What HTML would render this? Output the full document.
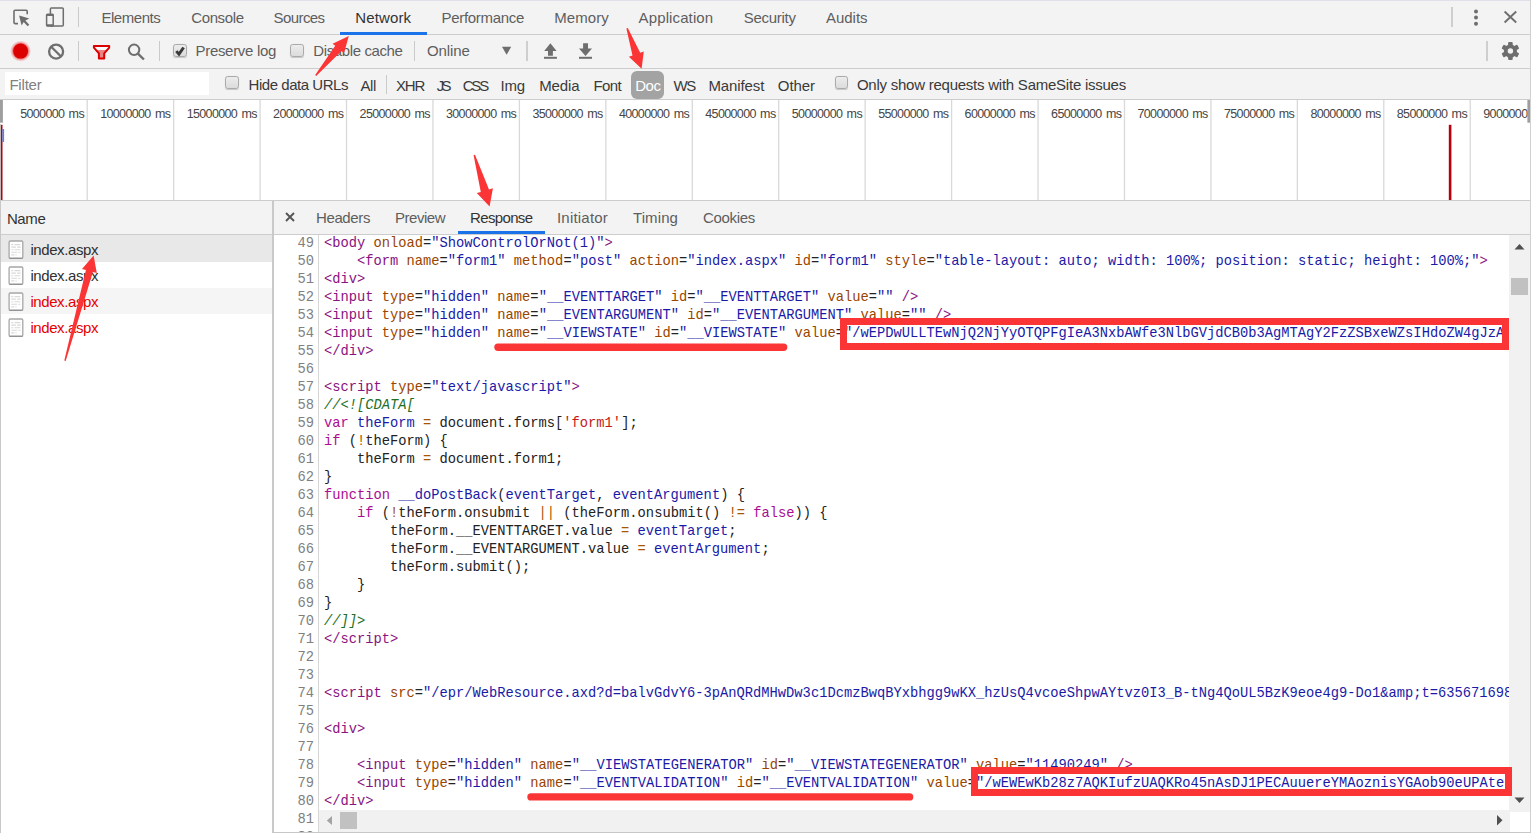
<!DOCTYPE html>
<html><head><meta charset="utf-8"><title>DevTools</title>
<style>
html,body{margin:0;padding:0}
body{width:1531px;height:833px;position:relative;overflow:hidden;background:#fff;font-family:"Liberation Sans", sans-serif}
.abs,.t,.gl,.fi{position:absolute}
.t{white-space:pre;line-height:20px;height:20px;font-family:"Liberation Sans", sans-serif}
.gl{top:100px;width:1.2px;height:100px;background:#dcdcdc}
.hl{position:absolute;left:0;width:1531px;height:1px;background:#cdcdcd}
.vs{position:absolute;width:1px;background:#cacaca}
.cb{position:absolute;width:11.3px;height:11.2px;border:1px solid #aaa;border-radius:2.8px;background:linear-gradient(#ececec,#dcdcdc);box-shadow:0 0.6px 0.8px rgba(0,0,0,.18)}
.fi{left:8px;width:13px;height:16px;border:1px solid #b4b4b4;border-radius:2px;background:#fdfdfd;box-shadow:0 1px 0 #c8c8c8}
.fi b{display:block;height:1px;margin:2px 2px 0 2px;background:#d4d4d4}
.fi b:first-child{margin-top:3px}
#nums,#code{position:absolute;top:234px;font:13.75px/18px "Liberation Mono", monospace;white-space:pre}
#nums{left:274px;width:40px;text-align:right;color:#808080}
#code{left:324px;color:#222}
#code i{font-style:normal}
#code .g{color:#881280} #code .a{color:#994500} #code .v{color:#1a1aa6}
#code .k{color:#aa0d91} #code .d{color:#1a1aa6} #code .o{color:#a85400}
#code .s{color:#c41a16} #code .c{color:#236e25;font-style:italic}
</style></head><body>
<!-- top bars -->
<div class="abs" style="left:0;top:0;width:1531px;height:100px;background:#f3f3f3"></div>
<div class="hl" style="top:0;background:#dfe0ea"></div>
<div class="hl" style="top:34px"></div>
<div class="hl" style="top:68px"></div>
<div class="hl" style="top:99px"></div>
<!-- active tab underline -->
<div class="abs" style="left:340px;top:32px;width:87px;height:3px;background:#1a73e8"></div>
<!-- separators -->
<div class="vs" style="left:78px;top:7px;height:20px"></div>
<div class="vs" style="left:1451.3px;top:7px;height:20px;width:1.6px;background:#cecece"></div>
<div class="vs" style="left:78px;top:41px;height:20px"></div>
<div class="vs" style="left:159px;top:41px;height:20px"></div>
<div class="vs" style="left:414px;top:41px;height:20px"></div>
<div class="vs" style="left:526.2px;top:41px;height:20px;width:1.7px;background:#cecece"></div>
<div class="vs" style="left:1486.3px;top:41px;height:20px;width:1.6px;background:#cecece"></div>
<div class="vs" style="left:386px;top:75px;height:19px"></div>
<!-- filter input -->
<div class="abs" style="left:5px;top:72px;width:204px;height:23px;background:#fff"></div>
<!-- Doc pill -->
<div class="abs" style="left:631px;top:71px;width:33px;height:28px;border-radius:6px;background:#a3a3a3"></div>
<!-- checkboxes -->
<div class="cb" style="left:173.3px;top:44.3px"></div>
<div class="cb" style="left:290.3px;top:44.3px"></div>
<div class="cb" style="left:225.4px;top:76.2px"></div>
<div class="cb" style="left:834.5px;top:76.2px"></div>
<!-- icons -->
<svg class="abs" style="left:0;top:0" width="1531" height="100" viewBox="0 0 1531 100">
 <!-- inspect -->
 <g fill="none" stroke="#6e6e6e" stroke-width="1.6">
  <path d="M27.2 14.3V11.3a1 1 0 0 0-1-1H15a1 1 0 0 0-1 1v11.3a1 1 0 0 0 1 1h3"/>
 </g>
 <path d="M19.1 15.6l10.2 3-3.9 1.9 3.9 4.2-1.7 1.5-3.9-4.3-2.1 3.6z" fill="#6e6e6e"/>
 <!-- device -->
 <g fill="none" stroke="#6e6e6e" stroke-width="1.5">
  <rect x="50.4" y="8" width="12.9" height="17.9" rx="1"/>
  <rect x="46.6" y="14.3" width="6.6" height="11.6" rx="0.8" fill="#f3f3f3"/>
  <path d="M46.6 14.9h6.6M46.6 25.2h6.6" stroke-width="2"/>
 </g>
 <!-- dots -->
 <circle cx="1476" cy="11.5" r="2" fill="#6e6e6e"/><circle cx="1476" cy="17.6" r="2" fill="#6e6e6e"/><circle cx="1476" cy="23.8" r="2" fill="#6e6e6e"/>
 <!-- close -->
 <path d="M1504.6 11.5l11.6 11M1516.2 11.5l-11.6 11" stroke="#6e6e6e" stroke-width="1.9" fill="none"/>
 <!-- record -->
 <defs><radialGradient id="rg"><stop offset="0.7" stop-color="#e84040" stop-opacity="0.75"/><stop offset="1" stop-color="#f08080" stop-opacity="0"/></radialGradient></defs><circle cx="20.6" cy="51.1" r="10.6" fill="url(#rg)"/>
 <circle cx="20.6" cy="51.1" r="7.5" fill="#dd0000"/>
 <!-- clear -->
 <circle cx="56.1" cy="51.6" r="7" fill="none" stroke="#6e6e6e" stroke-width="2.3"/>
 <path d="M51.2 46.7l9.8 9.8" stroke="#6e6e6e" stroke-width="2.3"/>
 <!-- funnel -->
 <path d="M93.9 46h15.3v1.6l-5 5.8v5h-5.3v-5l-5-5.8z" fill="#fbfbfb"/>
 <path d="M96.8 50h9.5l-2.1 3.4v5h-5.3v-5z" fill="#e98585"/>
 <path d="M93.9 46h15.3v1.6l-5 5.8v5.2h-5.3v-5.2l-5-5.8z" fill="none" stroke="#dd0000" stroke-width="2" stroke-linejoin="round"/>
 <!-- search -->
 <circle cx="134.1" cy="49.8" r="5.2" fill="none" stroke="#6e6e6e" stroke-width="2"/>
 <path d="M137.9 53.6l6 5.9" stroke="#6e6e6e" stroke-width="2.4"/>
 <!-- dropdown -->
 <path d="M502 46.8h9.2l-4.6 8z" fill="#6e6e6e"/>
 <!-- upload -->
 <path d="M550.4 43.2l6.2 7.7h-3.7v4.9h-4.9v-4.9h-3.8z" fill="#6e6e6e"/>
 <rect x="544" y="56.8" width="12.9" height="2" fill="#6e6e6e"/>
 <!-- download -->
 <path d="M585.5 56l6.5-7.6h-4v-5.2h-4.9v5.2h-4.1z" fill="#6e6e6e"/>
 <rect x="579" y="56.8" width="13" height="2" fill="#6e6e6e"/>
 <!-- gear -->
 <g transform="translate(1510.4 51)">
  <g fill="#6e6e6e">
   <rect x="-2.3" y="-9" width="4.6" height="18" rx="1"/>
   <rect x="-2.3" y="-9" width="4.6" height="18" rx="1" transform="rotate(60)"/>
   <rect x="-2.3" y="-9" width="4.6" height="18" rx="1" transform="rotate(120)"/>
   <circle r="6.6"/>
  </g>
  <circle r="2.7" fill="#f3f3f3"/>
 </g>
 <!-- check mark -->
 <path d="M176.3 51.1l2.7 3 4.6-6.6" fill="none" stroke="#3a3a3a" stroke-width="2.9"/>
</svg>
<!-- timeline -->
<svg class="abs" style="left:0;top:100px" width="1531" height="101" viewBox="0 100 1531 101"><rect x="86.55" y="100" width="1.3" height="100" fill="#d9d9d9"/><rect x="172.99" y="100" width="1.3" height="100" fill="#d9d9d9"/><rect x="259.43" y="100" width="1.3" height="100" fill="#d9d9d9"/><rect x="345.87" y="100" width="1.3" height="100" fill="#d9d9d9"/><rect x="432.31" y="100" width="1.3" height="100" fill="#d9d9d9"/><rect x="518.75" y="100" width="1.3" height="100" fill="#d9d9d9"/><rect x="605.19" y="100" width="1.3" height="100" fill="#d9d9d9"/><rect x="691.63" y="100" width="1.3" height="100" fill="#d9d9d9"/><rect x="778.07" y="100" width="1.3" height="100" fill="#d9d9d9"/><rect x="864.51" y="100" width="1.3" height="100" fill="#d9d9d9"/><rect x="950.95" y="100" width="1.3" height="100" fill="#d9d9d9"/><rect x="1037.39" y="100" width="1.3" height="100" fill="#d9d9d9"/><rect x="1123.83" y="100" width="1.3" height="100" fill="#d9d9d9"/><rect x="1210.27" y="100" width="1.3" height="100" fill="#d9d9d9"/><rect x="1296.71" y="100" width="1.3" height="100" fill="#d9d9d9"/><rect x="1383.15" y="100" width="1.3" height="100" fill="#d9d9d9"/><rect x="1469.59" y="100" width="1.3" height="100" fill="#d9d9d9"/>
<rect x="0" y="100" width="2.9" height="22.7" fill="#9e9e9e"/>
<rect x="0" y="124" width="1" height="77" fill="#ccc"/>
<rect x="1527.4" y="100" width="2.6" height="22.7" fill="#9e9e9e"/>
<rect x="0.9" y="124.8" width="1.6" height="75.2" fill="#b4000f"/>
<rect x="2.5" y="129" width="1.6" height="13" fill="#3b8bff"/>
<rect x="1448.8" y="124.8" width="2.6" height="75.2" fill="#b4000f"/>
</svg>
<div class="hl" style="top:200px"></div>
<div class="abs" style="left:0;top:201px;width:1531px;height:33px;background:#f3f3f3"></div>
<div class="hl" style="top:234px"></div>
<!-- right window edge -->
<div class="abs" style="left:1530px;top:0;width:1px;height:833px;background:#d0d0d0"></div>
<!-- left panel -->
<div class="abs" style="left:0;top:201px;width:1px;height:632px;background:#c8c8c8"></div>
<div class="abs" style="left:1px;top:235px;width:271px;height:27px;background:#e8e8e8"></div>
<div class="abs" style="left:1px;top:288px;width:271px;height:26px;background:#f5f5f5"></div>
<svg class="abs" style="left:0;top:0" width="272" height="400" viewBox="0 0 272 400"><rect x="9.1" y="241.00" width="13.7" height="17.2" rx="1.2" fill="#fff" stroke="#a6a6a6" stroke-width="1.3"/><path d="M9.3 258.40h13.3" stroke="#8e8e8e" stroke-width="1"/><path d="M11.3 244.70h2m1.2 0h5.8" stroke="#d9d9d9" stroke-width="1.2"/><path d="M11.3 247.22h4.6m1.2 0h3.6" stroke="#d9d9d9" stroke-width="1.2"/><path d="M11.3 249.74h2m1.2 0h5.8" stroke="#d9d9d9" stroke-width="1.2"/><path d="M11.3 252.26h5.8m1.2 0h2.2" stroke="#d9d9d9" stroke-width="1.2"/><path d="M11.3 254.78h3m1.2 0h1" stroke="#d9d9d9" stroke-width="1.2"/><rect x="9.1" y="267.00" width="13.7" height="17.2" rx="1.2" fill="#fff" stroke="#a6a6a6" stroke-width="1.3"/><path d="M9.3 284.40h13.3" stroke="#8e8e8e" stroke-width="1"/><path d="M11.3 270.70h2m1.2 0h5.8" stroke="#d9d9d9" stroke-width="1.2"/><path d="M11.3 273.22h4.6m1.2 0h3.6" stroke="#d9d9d9" stroke-width="1.2"/><path d="M11.3 275.74h2m1.2 0h5.8" stroke="#d9d9d9" stroke-width="1.2"/><path d="M11.3 278.26h5.8m1.2 0h2.2" stroke="#d9d9d9" stroke-width="1.2"/><path d="M11.3 280.78h3m1.2 0h1" stroke="#d9d9d9" stroke-width="1.2"/><rect x="9.1" y="293.00" width="13.7" height="17.2" rx="1.2" fill="#fff" stroke="#a6a6a6" stroke-width="1.3"/><path d="M9.3 310.40h13.3" stroke="#8e8e8e" stroke-width="1"/><path d="M11.3 296.70h2m1.2 0h5.8" stroke="#d9d9d9" stroke-width="1.2"/><path d="M11.3 299.22h4.6m1.2 0h3.6" stroke="#d9d9d9" stroke-width="1.2"/><path d="M11.3 301.74h2m1.2 0h5.8" stroke="#d9d9d9" stroke-width="1.2"/><path d="M11.3 304.26h5.8m1.2 0h2.2" stroke="#d9d9d9" stroke-width="1.2"/><path d="M11.3 306.78h3m1.2 0h1" stroke="#d9d9d9" stroke-width="1.2"/><rect x="9.1" y="319.00" width="13.7" height="17.2" rx="1.2" fill="#fff" stroke="#a6a6a6" stroke-width="1.3"/><path d="M9.3 336.40h13.3" stroke="#8e8e8e" stroke-width="1"/><path d="M11.3 322.70h2m1.2 0h5.8" stroke="#d9d9d9" stroke-width="1.2"/><path d="M11.3 325.22h4.6m1.2 0h3.6" stroke="#d9d9d9" stroke-width="1.2"/><path d="M11.3 327.74h2m1.2 0h5.8" stroke="#d9d9d9" stroke-width="1.2"/><path d="M11.3 330.26h5.8m1.2 0h2.2" stroke="#d9d9d9" stroke-width="1.2"/><path d="M11.3 332.78h3m1.2 0h1" stroke="#d9d9d9" stroke-width="1.2"/></svg>
<div class="abs" style="left:272px;top:201px;width:2px;height:632px;background:#c9c9c9"></div>
<!-- right panel -->
<div class="abs" style="left:458px;top:231px;width:87px;height:3px;background:#1a73e8"></div>
<svg class="abs" style="left:284px;top:211px" width="12" height="12" viewBox="0 0 12 12"><path d="M2 2l8 8M10 2l-8 8" stroke="#555" stroke-width="1.9" fill="none"/></svg>
<div id="codeclip" class="abs" style="left:274px;top:235px;width:1235px;height:597px;overflow:hidden">
 <div id="nums" style="left:0;top:0px"><div>49</div><div>50</div><div>51</div><div>52</div><div>53</div><div>54</div><div>55</div><div>56</div><div>57</div><div>58</div><div>59</div><div>60</div><div>61</div><div>62</div><div>63</div><div>64</div><div>65</div><div>66</div><div>67</div><div>68</div><div>69</div><div>70</div><div>71</div><div>72</div><div>73</div><div>74</div><div>75</div><div>76</div><div>77</div><div>78</div><div>79</div><div>80</div><div>81</div><div>82</div></div>
 <div class="abs" style="left:44px;top:0;width:1px;height:600px;background:#d6d6d6"></div>
 <div id="code" style="left:50px;top:0px"><div><i class="g">&lt;body</i> <i class="a">onload</i>=<i class="v">&quot;ShowControlOrNot(1)&quot;</i><i class="g">&gt;</i></div><div>    <i class="g">&lt;form</i> <i class="a">name</i>=<i class="v">&quot;form1&quot;</i> <i class="a">method</i>=<i class="v">&quot;post&quot;</i> <i class="a">action</i>=<i class="v">&quot;index.aspx&quot;</i> <i class="a">id</i>=<i class="v">&quot;form1&quot;</i> <i class="a">style</i>=<i class="v">&quot;table-layout: auto; width: 100%; position: static; height: 100%;&quot;</i><i class="g">&gt;</i></div><div><i class="g">&lt;div&gt;</i></div><div><i class="g">&lt;input</i> <i class="a">type</i>=<i class="v">&quot;hidden&quot;</i> <i class="a">name</i>=<i class="v">&quot;__EVENTTARGET&quot;</i> <i class="a">id</i>=<i class="v">&quot;__EVENTTARGET&quot;</i> <i class="a">value</i>=<i class="v">&quot;&quot;</i> <i class="g">/&gt;</i></div><div><i class="g">&lt;input</i> <i class="a">type</i>=<i class="v">&quot;hidden&quot;</i> <i class="a">name</i>=<i class="v">&quot;__EVENTARGUMENT&quot;</i> <i class="a">id</i>=<i class="v">&quot;__EVENTARGUMENT&quot;</i> <i class="a">value</i>=<i class="v">&quot;&quot;</i> <i class="g">/&gt;</i></div><div><i class="g">&lt;input</i> <i class="a">type</i>=<i class="v">&quot;hidden&quot;</i> <i class="a">name</i>=<i class="v">&quot;__VIEWSTATE&quot;</i> <i class="a">id</i>=<i class="v">&quot;__VIEWSTATE&quot;</i> <i class="a">value</i>=<i class="v">&quot;/wEPDwULLTEwNjQ2NjYyOTQPFgIeA3NxbAWfe3NlbGVjdCB0b3AgMTAgY2FzZSBxeWZsIHdoZW4gJzAwJyB0aGVuICfkuI</i></div><div><i class="g">&lt;/div&gt;</i></div><div>&nbsp;</div><div><i class="g">&lt;script</i> <i class="a">type</i>=<i class="v">&quot;text/javascript&quot;</i><i class="g">&gt;</i></div><div><i class="c">//&lt;![CDATA[</i></div><div><i class="k">var</i> <i class="d">theForm</i> <i class="o">=</i> document.forms[<i class="s">&#x27;form1&#x27;</i>];</div><div><i class="k">if</i> (<i class="o">!</i>theForm) {</div><div>    theForm <i class="o">=</i> document.form1;</div><div>}</div><div><i class="k">function</i> <i class="d">__doPostBack</i>(<i class="d">eventTarget</i>, <i class="d">eventArgument</i>) {</div><div>    <i class="k">if</i> (<i class="o">!</i>theForm.onsubmit <i class="o">||</i> (theForm.onsubmit() <i class="o">!=</i> <i class="k">false</i>)) {</div><div>        theForm.__EVENTTARGET.value <i class="o">=</i> <i class="d">eventTarget</i>;</div><div>        theForm.__EVENTARGUMENT.value <i class="o">=</i> <i class="d">eventArgument</i>;</div><div>        theForm.submit();</div><div>    }</div><div>}</div><div><i class="c">//]]&gt;</i></div><div><i class="g">&lt;/script&gt;</i></div><div>&nbsp;</div><div>&nbsp;</div><div><i class="g">&lt;script</i> <i class="a">src</i>=<i class="v">&quot;/epr/WebResource.axd?d=balvGdvY6-3pAnQRdMHwDw3c1DcmzBwqBYxbhgg9wKX_hzUsQ4vcoeShpwAYtvz0I3_B-tNg4QoUL5BzK9eoe4g9-Do1&amp;amp;t=635671698762343750&quot;</i></div><div>&nbsp;</div><div><i class="g">&lt;div&gt;</i></div><div>&nbsp;</div><div>    <i class="g">&lt;input</i> <i class="a">type</i>=<i class="v">&quot;hidden&quot;</i> <i class="a">name</i>=<i class="v">&quot;__VIEWSTATEGENERATOR&quot;</i> <i class="a">id</i>=<i class="v">&quot;__VIEWSTATEGENERATOR&quot;</i> <i class="a">value</i>=<i class="v">&quot;11490249&quot;</i> <i class="g">/&gt;</i></div><div>    <i class="g">&lt;input</i> <i class="a">type</i>=<i class="v">&quot;hidden&quot;</i> <i class="a">name</i>=<i class="v">&quot;__EVENTVALIDATION&quot;</i> <i class="a">id</i>=<i class="v">&quot;__EVENTVALIDATION&quot;</i> <i class="a">value</i>=<i class="v">&quot;/wEWEwKb28z7AQKIufzUAQKRo45nAsDJ1PECAuuereYMAoznisYGAob90eUPAte6wKgHAsTKy</i></div><div><i class="g">&lt;/div&gt;</i></div><div>&nbsp;</div><div>&nbsp;</div></div>
</div>
<!-- scrollbars -->
<div class="abs" style="left:1509px;top:235px;width:21px;height:577px;background:#f1f1f1"></div><div class="abs" style="left:1510px;top:812px;width:20px;height:19px;background:#fff"></div>
<div class="abs" style="left:1511px;top:278px;width:17px;height:17px;background:#c1c1c1"></div>
<div class="abs" style="left:319px;top:810px;width:1191px;height:22px;background:#f1f1f1"></div>
<div class="abs" style="left:340px;top:812px;width:17px;height:17px;background:#c1c1c1"></div>
<svg class="abs" style="left:0;top:0" width="1531" height="833" viewBox="0 0 1531 833">
 <path d="M1514.5 249.5l5-5.5 5 5.5z" fill="#505050"/>
 <path d="M1514.5 797.5l5 5.5 5-5.5z" fill="#505050"/>
 <path d="M332 816l-5.2 4.5 5.2 4.5z" fill="#a3a3a3"/>
 <path d="M1497 815l5.5 5.3-5.5 5.3z" fill="#505050"/>
</svg>
<div class="abs" style="left:272px;top:832px;width:1259px;height:1px;background:#c8c8c8"></div>
<span class="t" style="left:101.4px;top:8.0px;font-size:15px;letter-spacing:-0.441px;color:#5e5e5e;">Elements</span><span class="t" style="left:191.2px;top:8.0px;font-size:15px;letter-spacing:-0.364px;color:#5e5e5e;">Console</span><span class="t" style="left:273.5px;top:8.0px;font-size:15px;letter-spacing:-0.576px;color:#5e5e5e;">Sources</span><span class="t" style="left:355.3px;top:8.0px;font-size:15px;letter-spacing:0.126px;color:#333;">Network</span><span class="t" style="left:441.6px;top:8.0px;font-size:15px;letter-spacing:-0.316px;color:#5e5e5e;">Performance</span><span class="t" style="left:554.3px;top:8.0px;font-size:15px;letter-spacing:0.055px;color:#5e5e5e;">Memory</span><span class="t" style="left:638.6px;top:8.0px;font-size:15px;letter-spacing:0.119px;color:#5e5e5e;">Application</span><span class="t" style="left:743.7px;top:8.0px;font-size:15px;letter-spacing:-0.273px;color:#5e5e5e;">Security</span><span class="t" style="left:825.9px;top:8.0px;font-size:15px;letter-spacing:-0.001px;color:#5e5e5e;">Audits</span><span class="t" style="left:195.5px;top:41.0px;font-size:15px;letter-spacing:-0.310px;color:#5e5e5e;">Preserve log</span><span class="t" style="left:313.3px;top:41.0px;font-size:15px;letter-spacing:-0.386px;color:#5e5e5e;">Disable cache</span><span class="t" style="left:427.0px;top:41.0px;font-size:15px;letter-spacing:-0.127px;color:#5e5e5e;">Online</span><span class="t" style="left:9.4px;top:75.0px;font-size:15px;letter-spacing:-0.191px;color:#808080;">Filter</span><span class="t" style="left:248.6px;top:75.0px;font-size:15px;letter-spacing:-0.464px;color:#3a3a3a;">Hide data URLs</span><span class="t" style="left:360.4px;top:76.0px;font-size:15px;letter-spacing:-0.357px;color:#3a3a3a;">All</span><span class="t" style="left:396.0px;top:76.0px;font-size:15px;letter-spacing:-1.224px;color:#3a3a3a;">XHR</span><span class="t" style="left:436.7px;top:76.0px;font-size:15px;letter-spacing:-2.608px;color:#3a3a3a;">JS</span><span class="t" style="left:462.7px;top:76.0px;font-size:15px;letter-spacing:-2.181px;color:#3a3a3a;">CSS</span><span class="t" style="left:500.4px;top:76.0px;font-size:15px;letter-spacing:-0.139px;color:#3a3a3a;">Img</span><span class="t" style="left:539.2px;top:76.0px;font-size:15px;letter-spacing:-0.132px;color:#3a3a3a;">Media</span><span class="t" style="left:593.5px;top:76.0px;font-size:15px;letter-spacing:-0.579px;color:#3a3a3a;">Font</span><span class="t" style="left:635.3px;top:76.0px;font-size:15px;letter-spacing:-0.529px;color:#fff;">Doc</span><span class="t" style="left:673.5px;top:76.0px;font-size:15px;letter-spacing:-1.336px;color:#3a3a3a;">WS</span><span class="t" style="left:708.4px;top:76.0px;font-size:15px;letter-spacing:-0.100px;color:#3a3a3a;">Manifest</span><span class="t" style="left:777.8px;top:76.0px;font-size:15px;letter-spacing:-0.063px;color:#3a3a3a;">Other</span><span class="t" style="left:856.9px;top:75.0px;font-size:15px;letter-spacing:-0.240px;color:#3a3a3a;">Only show requests with SameSite issues</span><span class="t" style="left:20.2px;top:103.5px;font-size:12.5px;letter-spacing:-0.651px;color:#454545;word-spacing:1.5px;">5000000 ms</span><span class="t" style="left:100.2px;top:103.5px;font-size:12.5px;letter-spacing:-0.642px;color:#454545;word-spacing:1.5px;">10000000 ms</span><span class="t" style="left:186.7px;top:103.5px;font-size:12.5px;letter-spacing:-0.642px;color:#454545;word-spacing:1.5px;">15000000 ms</span><span class="t" style="left:273.1px;top:103.5px;font-size:12.5px;letter-spacing:-0.642px;color:#454545;word-spacing:1.5px;">20000000 ms</span><span class="t" style="left:359.6px;top:103.5px;font-size:12.5px;letter-spacing:-0.642px;color:#454545;word-spacing:1.5px;">25000000 ms</span><span class="t" style="left:446.0px;top:103.5px;font-size:12.5px;letter-spacing:-0.642px;color:#454545;word-spacing:1.5px;">30000000 ms</span><span class="t" style="left:532.4px;top:103.5px;font-size:12.5px;letter-spacing:-0.642px;color:#454545;word-spacing:1.5px;">35000000 ms</span><span class="t" style="left:618.9px;top:103.5px;font-size:12.5px;letter-spacing:-0.642px;color:#454545;word-spacing:1.5px;">40000000 ms</span><span class="t" style="left:705.3px;top:103.5px;font-size:12.5px;letter-spacing:-0.642px;color:#454545;word-spacing:1.5px;">45000000 ms</span><span class="t" style="left:791.8px;top:103.5px;font-size:12.5px;letter-spacing:-0.642px;color:#454545;word-spacing:1.5px;">50000000 ms</span><span class="t" style="left:878.2px;top:103.5px;font-size:12.5px;letter-spacing:-0.642px;color:#454545;word-spacing:1.5px;">55000000 ms</span><span class="t" style="left:964.6px;top:103.5px;font-size:12.5px;letter-spacing:-0.642px;color:#454545;word-spacing:1.5px;">60000000 ms</span><span class="t" style="left:1051.1px;top:103.5px;font-size:12.5px;letter-spacing:-0.642px;color:#454545;word-spacing:1.5px;">65000000 ms</span><span class="t" style="left:1137.5px;top:103.5px;font-size:12.5px;letter-spacing:-0.642px;color:#454545;word-spacing:1.5px;">70000000 ms</span><span class="t" style="left:1224.0px;top:103.5px;font-size:12.5px;letter-spacing:-0.642px;color:#454545;word-spacing:1.5px;">75000000 ms</span><span class="t" style="left:1310.4px;top:103.5px;font-size:12.5px;letter-spacing:-0.642px;color:#454545;word-spacing:1.5px;">80000000 ms</span><span class="t" style="left:1396.8px;top:103.5px;font-size:12.5px;letter-spacing:-0.642px;color:#454545;word-spacing:1.5px;">85000000 ms</span><span class="t" style="left:1483.3px;top:103.5px;font-size:12.5px;letter-spacing:-0.642px;color:#454545;word-spacing:1.5px;clip-path:inset(0 26px 0 0);">90000000 ms</span><span class="t" style="left:6.9px;top:209.0px;font-size:15px;letter-spacing:-0.354px;color:#333;">Name</span><span class="t" style="left:30.4px;top:240.0px;font-size:15px;letter-spacing:-0.412px;color:#303030;">index.aspx</span><span class="t" style="left:30.4px;top:266.0px;font-size:15px;letter-spacing:-0.412px;color:#303030;">index.aspx</span><span class="t" style="left:30.4px;top:292.0px;font-size:15px;letter-spacing:-0.412px;color:#e60000;">index.aspx</span><span class="t" style="left:30.4px;top:318.0px;font-size:15px;letter-spacing:-0.412px;color:#e60000;">index.aspx</span><span class="t" style="left:316.0px;top:207.5px;font-size:15px;letter-spacing:-0.386px;color:#5e5e5e;">Headers</span><span class="t" style="left:395.0px;top:207.5px;font-size:15px;letter-spacing:-0.480px;color:#5e5e5e;">Preview</span><span class="t" style="left:470.0px;top:207.5px;font-size:15px;letter-spacing:-0.643px;color:#333;">Response</span><span class="t" style="left:557.0px;top:207.5px;font-size:15px;letter-spacing:0.200px;color:#5e5e5e;">Initiator</span><span class="t" style="left:633.0px;top:207.5px;font-size:15px;letter-spacing:0.091px;color:#5e5e5e;">Timing</span><span class="t" style="left:703.0px;top:207.5px;font-size:15px;letter-spacing:-0.315px;color:#5e5e5e;">Cookies</span>
<svg class="abs" style="left:0;top:0" width="1531" height="833" viewBox="0 0 1531 833">
 <!-- annotations -->
 <rect x="843.5" y="321.5" width="662" height="25" fill="none" stroke="#fb3535" stroke-width="7"/>
 <rect x="974.5" y="770.5" width="534" height="22" fill="none" stroke="#fb3535" stroke-width="7"/>
 <path d="M498 347.2H783.6" stroke="#fb3535" stroke-width="7.4" stroke-linecap="round" fill="none"/>
 <path d="M531 796.9H909.6" stroke="#fb3535" stroke-width="7.4" stroke-linecap="round" fill="none"/>
 <polygon points="316.2,75.9 341.5,51.1 344.0,53.2 348.8,36.0 332.6,43.7 335.2,45.8 315.2,74.9" fill="#fb3535"/><polygon points="626.4,28.5 632.5,55.5 628.9,56.8 641.6,68.8 643.8,51.5 640.2,52.7 627.8,28.1" fill="#fb3535"/><polygon points="473.6,155.2 480.8,191.9 476.8,193.1 489.6,206.6 492.9,188.3 489.0,189.5 475.0,154.8" fill="#fb3535"/><polygon points="65.7,360.9 92.9,271.9 96.8,273.0 93.6,255.5 82.0,268.9 85.9,270.0 64.3,360.5" fill="#fb3535"/>
</svg>
</body></html>
